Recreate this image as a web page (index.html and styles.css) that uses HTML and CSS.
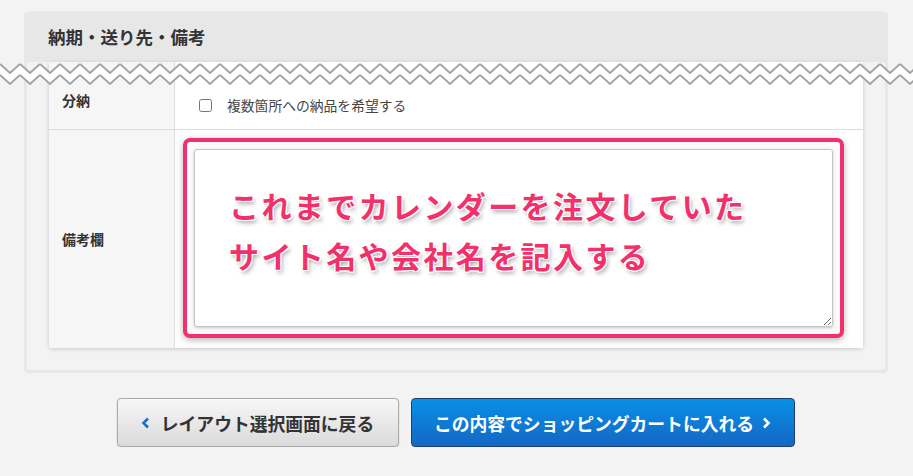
FILE: index.html
```html
<!DOCTYPE html>
<html lang="ja">
<head>
    <meta charset="UTF-8">
    <meta name="viewport" content="width=device-width, initial-scale=1.0">
    <title>納期・送り先・備考</title>
    <link rel="stylesheet" href="styles.css">
</head>
<body>
    <div class="panel">
        <div class="panel-head"><h2>納期・送り先・備考</h2></div>
        <div class="panel-body">
            <div class="form-card">
                <div class="cell-label row-split">分納</div>
                <div class="cell-value row-split">
                    <label class="check"><input type="checkbox"><span>複数箇所への納品を希望する</span></label>
                </div>
                <div class="cell-label row-note">備考欄</div>
                <div class="cell-value row-note">
                    <div class="note-mark">
                        <textarea></textarea>
                        <p class="note-tip">これまでカレンダーを注文していた<br>サイト名や会社名を記入する</p>
                    </div>
                </div>
            </div>
        </div>
    </div>

    <!-- torn edge between header and form -->
    <svg class="tear" height="26">
        <defs>
            <pattern id="zig" width="20" height="26" patternUnits="userSpaceOnUse">
                <polygon points="0,2 10,11 20,2 20,13 10,22 0,13" fill="#fff"/>
                <polyline points="0,2 10,11 20,2" fill="none" stroke="#a3a3a3" stroke-width="2"/>
                <polyline points="0,13 10,22 20,13" fill="none" stroke="#a3a3a3" stroke-width="2"/>
            </pattern>
        </defs>
        <rect width="100%" height="26" fill="url(#zig)"/>
    </svg>

    <div class="actions">
        <button class="btn btn-back">
            <svg class="chev" width="9" height="12" viewBox="0 0 9 12"><polyline points="7,1.5 2.5,6 7,10.5" fill="none" stroke="#1a6fd0" stroke-width="2.6"/></svg>
            レイアウト選択画面に戻る
        </button>
        <button class="btn btn-cart">
            この内容でショッピングカートに入れる
            <svg class="chev" width="9" height="12" viewBox="0 0 9 12"><polyline points="2,1.5 6.5,6 2,10.5" fill="none" stroke="#fff" stroke-width="2.6"/></svg>
        </button>
    </div>
</body>
</html>
```

FILE: styles.css
```css
body { margin: 0; padding: 11px 25px 0 24px; background: #f3f3f3; font-family: "Noto Sans CJK JP", "Noto Sans", sans-serif; color: #333; position: relative; }
.panel { border: 3px solid #e7e7e7; border-top: none; border-radius: 5px; background: #f3f3f3; }
.panel-head { background: #e7e7e7; height: 51px; border-radius: 5px 5px 0 0; display: flex; align-items: center; padding-left: 21px; }
.panel-head h2 { margin: 0; font-size: 17.5px; font-weight: bold; color: #333; }
.panel-body { padding: 0 22px 22px 22px; }
.form-card { display: grid; grid-template-columns: 126px 1fr; background: #fff; box-shadow: 0 1px 4px rgba(0, 0, 0, 0.18); border-radius: 0 0 3px 3px; }
.cell-label { background: #f6f6f6; border-right: 1px solid #dcdcdc; font-size: 14px; font-weight: bold; padding-left: 13px; color: #333; }
.cell-value { background: #fff; }
.row-split { height: 67px; border-bottom: 1px solid #dcdcdc; }
.cell-label.row-split { padding-top: 28px; height: 39px; }
.cell-value.row-split { padding: 33px 0 0 24px; height: 34px; box-sizing: content-box; }
.row-note.cell-label { display: flex; align-items: center; height: 218px; border-radius: 0 0 0 3px; }
.row-note.cell-value { height: 218px; padding: 8px 19px 10px 8px; box-sizing: border-box; }
.check { display: flex; align-items: center; gap: 15px; font-size: 13.8px; color: #444; }
.check input { margin: 0; width: 13px; height: 13px; }
.note-mark { position: relative; height: 200px; box-sizing: border-box; border: 4px solid #f2316c; border-radius: 7px; padding: 7px; box-shadow: 0 2px 6px rgba(0, 0, 0, 0.3); background: #fafafa; }
.note-mark textarea { display: block; width: 100%; height: 178px; box-sizing: border-box; border: 1px solid #c4c4c4; border-radius: 3px; background: #fff; box-shadow: 0 1px 3px rgba(0, 0, 0, 0.2); resize: both; margin: 0; }
.note-tip { position: absolute; left: 42px; top: 38px; margin: 0; font-size: 30px; line-height: 50px; font-weight: bold; letter-spacing: 2.4px; color: #f2316c;
    text-shadow: 1px 0 0 #fff, -1px 0 0 #fff, 0 1px 0 #fff, 0 -1px 0 #fff, 1px 1px 0 #fff, -1px -1px 0 #fff, 1px -1px 0 #fff, -1px 1px 0 #fff, 2px 3px 4px rgba(0, 0, 0, 0.35); }
.tear { position: absolute; left: 0; top: 62px; width: 100%; }
.actions { display: flex; justify-content: center; gap: 12px; margin-top: 25px; padding-right: 1px; }
.btn { height: 49px; border-radius: 4px; font-family: inherit; font-size: 17.8px; font-weight: bold; display: flex; align-items: center; justify-content: center; cursor: pointer; padding: 0; }
.btn-back { width: 282px; background: linear-gradient(#f7f7f7, #dadada); border: 1px solid #a9a9a9; color: #333; box-shadow: 0 1px 2px rgba(0, 0, 0, 0.15); }
.btn-back .chev { margin-right: 11px; }
.btn-cart { width: 384px; background: linear-gradient(#0890e6, #1467c4); border: 1px solid #1c3e72; color: #fff; }
.btn-cart .chev { margin-left: 8px; }
```
